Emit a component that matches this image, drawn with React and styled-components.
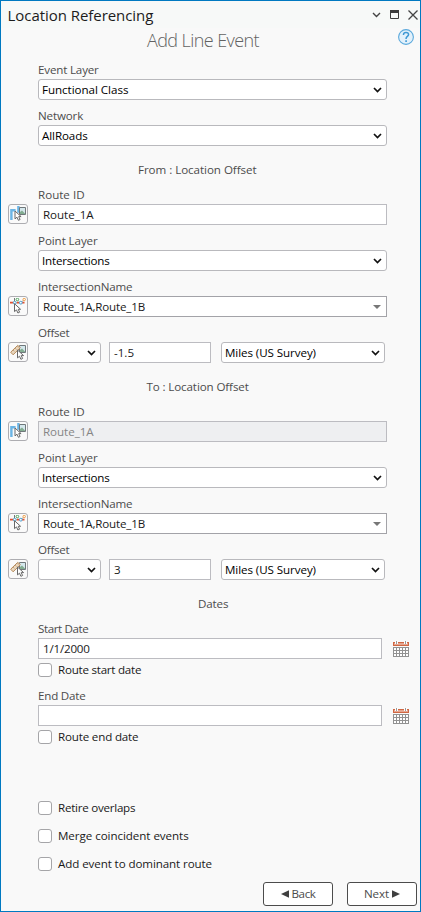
import React from 'react';
import styled, { createGlobalStyle } from 'styled-components';

const GlobalStyle = createGlobalStyle`
  *, *::before, *::after { box-sizing: border-box; }
  body { margin: 0; background: #f9f9f9; }
  svg { display: block; flex: none; }
`;

const Pane = styled.main`
  display: flex;
  flex-direction: column;
  width: 421px;
  height: 912px;
  border: 1px solid #0079c1;
  background: #f9f9f9;
  color: #4c4c4c;
  font: 11.6px/18px 'Open Sans', 'Noto Sans', sans-serif;
  white-space: nowrap;
`;

const TitleBar = styled.header`
  display: flex;
  align-items: center;
  height: 27px;
  padding: 0 2px 0 6.5px;
  background: #f7f9f8;
`;

const PaneTitle = styled.h1`
  flex: 1;
  margin: 0;
  color: #1c1c1c;
  font-size: 15px;
  font-weight: 400;
  letter-spacing: -0.05px;
`;

const WindowControls = styled.div`
  display: flex;
  align-items: center;
  gap: 9px;
  color: #3c3c3c;
`;

const ToolHeader = styled.div`
  display: flex;
  height: 26px;
  padding: 1px 6px 0 0;
`;

const ToolTitle = styled.h2`
  flex: 1;
  margin: 0;
  padding-left: 7px;
  color: #626262;
  font-size: 18px;
  font-weight: 300;
  line-height: 23px;
  letter-spacing: -0.57px;
  text-align: center;
`;

const SectionTitle = styled.h3`
  margin: 0;
  padding: 15px 0 0 ${(p) => p.$indent}px;
  font-size: inherit;
  font-weight: 400;
  letter-spacing: ${(p) => p.$track || 0}px;
`;

const FieldGrid = styled.div`
  display: grid;
  grid-template-columns: 30px ${(p) => p.$width || 349}px auto;
  grid-template-rows: 25px 21px;
  justify-content: start;
  padding-left: 7px;
`;

const Label = styled.span`
  grid-column: 2 / 4;
  padding-top: 7px;
  letter-spacing: ${(p) => p.$track || 0}px;
`;

const IconSlot = styled.span`
  grid-column: 1;
  grid-row: 2;
`;

const PickButton = styled.button`
  display: grid;
  place-items: center;
  width: 20px;
  height: 20px;
  padding: 0;
  border: 1px solid #adadb1;
  border-radius: 3px;
  background: #fafafa;
`;

const Control = styled.div`
  display: flex;
  align-items: center;
  justify-content: space-between;
  width: ${(p) => (p.$width ? `${p.$width}px` : 'auto')};
  height: 21px;
  border: 1px solid #b9b9bd;
  background: #fff;
  color: #1a1a1a;
  line-height: 19px;
  letter-spacing: ${(p) => p.$track || 0}px;
`;

const SelectBox = styled(Control)`
  padding: 0 4px 0 3px;
  border-radius: 3px;
  color: #000;
`;

const InputBox = styled(Control)`
  padding: 0 5px 0 4px;
  border-color: ${(p) => (p.$dark ? '#a3a3a8' : '#bcbcc1')};
  background: ${(p) => (p.$disabled ? '#eeeff1' : '#fff')};
  color: ${(p) => (p.$disabled ? '#858585' : '#1a1a1a')};
`;

const OffsetControls = styled.div`
  display: flex;
  gap: 8px;

  > :last-child { margin-left: 2px; }
`;

const CalendarSlot = styled.span`
  padding: 3px 0 0 11px;
`;

const CheckRow = styled.label`
  display: flex;
  align-items: center;
  gap: 6px;
  height: ${(p) => p.$height}px;
  padding-left: 37px;
  color: #1a1a1a;
  letter-spacing: ${(p) => p.$track}px;
`;

const CheckBox = styled.span`
  width: 14px;
  height: 14px;
  border: 1px solid #a5a5a8;
  border-radius: 3px;
  background: #fff;
`;

const Options = styled.div`
  margin-top: 47px;
`;

const Footer = styled.footer`
  display: flex;
  justify-content: flex-end;
  gap: 14px;
  padding: 4px 3px 0 0;
`;

const NavButton = styled.button`
  display: flex;
  align-items: center;
  justify-content: center;
  gap: 3px;
  width: 70px;
  height: 24px;
  padding: 0 2px;
  border: 1px solid #4c4c4c;
  border-radius: 3px;
  background: #fff;
  color: #4c4c4c;
  font: inherit;
  letter-spacing: ${(p) => p.$track}px;
`;

const Chevron = ({ color = '#111', width = 1.7 }) => (
  <svg width="9" height="6" viewBox="0 0 9 6" fill="none" stroke={color} strokeWidth={width}>
    <path d="M1 1 L4.5 4.5 L8 1" />
  </svg>
);

const Caret = () => (
  <svg width="8" height="4" viewBox="0 0 8 4"><path d="M0 0H8L4 4Z" fill="#777" /></svg>
);

const Arrow = ({ left }) => (
  <svg width="8" height="8" viewBox="0 0 8 8">
    <path d={left ? 'M8 0.3V7.7L0 4Z' : 'M0 0.3V7.7L8 4Z'} fill="#3f3f3f" />
  </svg>
);

const MaximizeIcon = () => (
  <svg width="9" height="9" viewBox="0 0 9 9">
    <path d="M.5 .5H8.5V8.5H.5Z" fill="none" stroke="#3c3c3c" />
    <path d="M0 0H9V3H0Z" fill="#3c3c3c" />
  </svg>
);

const CloseIcon = () => (
  <svg width="10" height="10" viewBox="0 0 10 10" stroke="#444" strokeWidth="1.3">
    <path d="M.5 .5L9.5 9.5M9.5 .5L.5 9.5" />
  </svg>
);

const HelpIcon = () => (
  <svg width="16" height="16" viewBox="0 0 16 16" fill="none">
    <circle cx="8" cy="8" r="7.4" fill="#e3f1fb" stroke="#5ba9dc" strokeWidth="1.1" />
    <path d="M5.5 6V5.6C5.5 4.2 6.5 3.4 8 3.4S10.6 4.3 10.6 5.6C10.6 7.3 8.1 7.5 8.1 9.5V10" stroke="#3f98d4" strokeWidth="1.5" />
    <path d="M7.3 11.3H8.9V12.9H7.3Z" fill="#3f98d4" />
  </svg>
);

const Cursor = ({ x, y }) => (
  <path
    transform={`translate(${x} ${y})`}
    d="M.5 .5V8.4L2.5 6.7L3.9 9.8L5.6 9L4.2 6.1H6.6Z"
    fill="#fff"
    stroke="#686868"
    strokeWidth="1"
  />
);

const Picture = ({ x, y }) => (
  <g transform={`translate(${x} ${y})`}>
    <path d="M.5 .5H6.5V7.5H.5Z" fill="#d5e8ed" stroke="#70787b" />
    <path d="M1 7V5L3 3.5L6 6.5V7Z" fill="#83ad91" />
  </g>
);

const RouteIcon = () => (
  <svg width="16" height="16" viewBox="0 0 16 16">
    <path d="M1.4 14V4.2H5.6M8.4 0V5.5H11" fill="none" stroke="#6bb5e5" strokeWidth="2.4" />
    <Picture x={9} y={1} />
    <Cursor x={4.5} y={4.5} />
  </svg>
);

const IntersectionIcon = () => (
  <svg width="16" height="16" viewBox="0 0 16 16" fill="none">
    <path d="M0 4.7H3.5M6.5 4.7H9.5M12 4.7H14.5" stroke="#e4502f" strokeWidth="1.7" />
    <path d="M4.5 0V3M12 3.5L13 2.5" stroke="#777" />
    <circle cx="4.7" cy="4.7" r="1.4" fill="#fff" stroke="#4a9fd0" />
    <circle cx="10.8" cy="4.7" r="1.4" fill="#fff" stroke="#4a9fd0" />
    <circle cx="7.4" cy="1.5" r="1.3" fill="#fff" stroke="#4ba35a" />
    <circle cx="14.2" cy="1.5" r="1.2" fill="#fff" stroke="#ee9c42" />
    <Cursor x={4} y={5.2} />
  </svg>
);

const MeasureIcon = () => (
  <svg width="16" height="16" viewBox="0 0 16 16">
    <Picture x={9} y={1} />
    <path d="M.7 8.2L7.7 1.4L10.4 3.6L3.1 10.8Z" fill="#ead7bd" stroke="#b58a5c" />
    <path d="M3.2 6.2L4.3 7.3M5.3 4.3L6.4 5.4M7.2 2.4L8.3 3.5" stroke="#a17b51" strokeWidth=".7" />
    <Cursor x={7} y={5.5} />
  </svg>
);

const CalendarIcon = () => (
  <svg width="16" height="16" viewBox="0 0 16 16" shapeRendering="crispEdges">
    <path d="M.5 1.5H15.5V4.5H.5Z" fill="#e5a58f" stroke="#cf6743" />
    <path d="M2 0H5V3H2ZM11 0H14V3H11Z" fill="#fff" />
    <path d="M3 0H4V3H3ZM12 0H13V3H12Z" fill="#999" />
    <path d="M0 6H16V16H0Z" fill="#929292" />
    <path
      d="M1 7.5H15M1 10.5H15M1 13.5H15"
      fill="none"
      stroke="#fff"
      strokeWidth="2"
      strokeDasharray="2 1"
      transform="translate(0 .5)"
    />
  </svg>
);

const Field = ({ label, track, icon: Icon, width, children, after }) => (
  <FieldGrid $width={width}>
    <Label $track={track}>{label}</Label>
    <IconSlot>{Icon && <PickButton aria-label={`Pick ${label}`}><Icon /></PickButton>}</IconSlot>
    {children}
    {after}
  </FieldGrid>
);

const Select = ({ value, track, width }) => (
  <SelectBox $track={track} $width={width}><span>{value}</span><Chevron /></SelectBox>
);

const LocationFields = ({ offset, disabled }) => (
  <section>
    <Field label="Route ID" icon={RouteIcon}>
      <InputBox $disabled={disabled} $track={-0.05}>Route_1A</InputBox>
    </Field>
    <Field label="Point Layer" track={-0.09}>
      <Select value="Intersections" track={-0.19} />
    </Field>
    <Field label="IntersectionName" track={-0.15} icon={IntersectionIcon}>
      <InputBox $dark $track={-0.18}><span>Route_1A,Route_1B</span><Caret /></InputBox>
    </Field>
    <Field label="Offset" track={-0.25} icon={MeasureIcon}>
      <OffsetControls>
        <Select width={63} />
        <InputBox $width={102}>{offset}</InputBox>
        <Select width={164} value="Miles (US Survey)" track={-0.08} />
      </OffsetControls>
    </Field>
  </section>
);

const DateField = ({ label, track, value }) => (
  <Field label={label} track={track} width={344} after={<CalendarSlot><CalendarIcon /></CalendarSlot>}>
    <InputBox $track={-0.2}>{value}</InputBox>
  </Field>
);

const Check = ({ label, track, height = 28 }) => (
  <CheckRow $height={height} $track={track}><CheckBox />{label}</CheckRow>
);

export default function App() {
  return (
    <>
      <GlobalStyle />
      <Pane>
        <TitleBar>
          <PaneTitle>Location Referencing</PaneTitle>
          <WindowControls>
            <Chevron color="#444" width={1.4} />
            <MaximizeIcon />
            <CloseIcon />
          </WindowControls>
        </TitleBar>
        <ToolHeader>
          <ToolTitle>Add Line Event</ToolTitle>
          <HelpIcon />
        </ToolHeader>
        <Field label="Event Layer" track={-0.17}><Select value="Functional Class" track={-0.04} /></Field>
        <Field label="Network" track={-0.15}><Select value="AllRoads" track={-0.1} /></Field>
        <SectionTitle $indent={137} $track={-0.05}>From : Location Offset</SectionTitle>
        <LocationFields offset="-1.5" />
        <SectionTitle $indent={145.5} $track={-0.12}>To : Location Offset</SectionTitle>
        <LocationFields offset="3" disabled />
        <SectionTitle $indent={197} $track={-0.15}>Dates</SectionTitle>
        <DateField label="Start Date" track={-0.4} value="1/1/2000" />
        <Check label="Route start date" track={-0.24} height={21} />
        <DateField label="End Date" track={-0.2} />
        <Check label="Route end date" track={-0.17} height={21} />
        <Options>
          <Check label="Retire overlaps" track={-0.25} />
          <Check label="Merge coincident events" track={-0.06} />
          <Check label="Add event to dominant route" track={-0.1} />
        </Options>
        <Footer>
          <NavButton $track={-0.4}><Arrow left />Back</NavButton>
          <NavButton $track={-0.1}>Next<Arrow /></NavButton>
        </Footer>
      </Pane>
    </>
  );
}
